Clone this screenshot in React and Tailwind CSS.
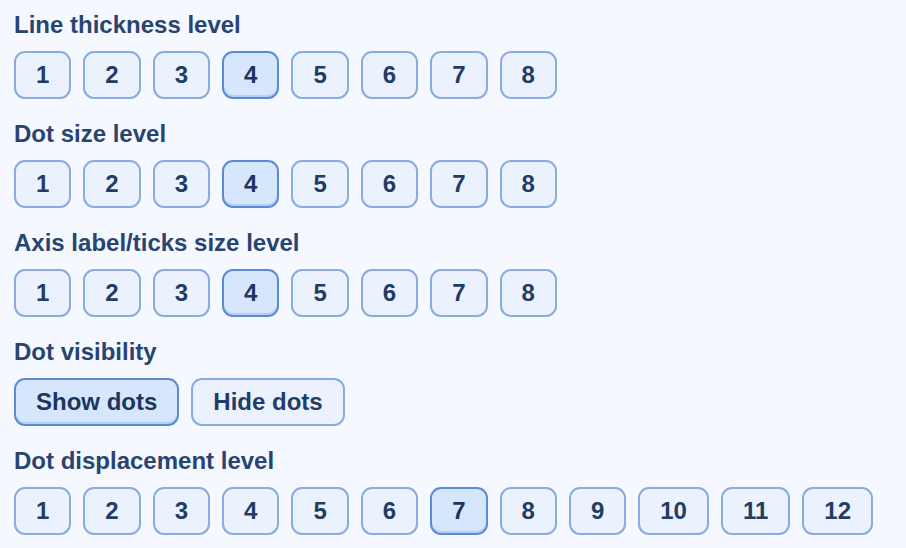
import React from "react";

function Btn({ label, selected }) {
  return (
    <button
      className={
        selected
          ? "rounded-[11px] border-2 border-[#5b8bd5] bg-[#d6e6fc] px-5 py-[8px] text-[24px] leading-[28px] font-bold text-[#1d365c] shadow-[inset_0_-2px_0_#b7cff2]"
          : "rounded-[11px] border-2 border-[#88ace0] bg-[#ebf2fe] px-5 py-[8px] text-[24px] leading-[28px] font-bold text-[#223d63]"
      }
    >
      {label}
    </button>
  );
}

function Section({ title, items, selected }) {
  return (
    <div className="flex flex-col gap-3">
      <div className="text-[24px] leading-[28px] font-bold text-[#27456f]">{title}</div>
      <div className="flex gap-3">
        {items.map((it) => (
          <Btn key={it} label={it} selected={it === selected} />
        ))}
      </div>
    </div>
  );
}

export default function App() {
  const eight = ["1", "2", "3", "4", "5", "6", "7", "8"];
  const twelve = ["1", "2", "3", "4", "5", "6", "7", "8", "9", "10", "11", "12"];
  return (
    <div
      className="w-[906px] h-[548px] overflow-hidden bg-[#f5f8ff] pl-[14px] pt-[11px] flex flex-col gap-[21px]"
      style={{ fontFamily: '"Liberation Sans", Arial, sans-serif' }}
    >
      <Section title="Line thickness level" items={eight} selected="4" />
      <Section title="Dot size level" items={eight} selected="4" />
      <Section title="Axis label/ticks size level" items={eight} selected="4" />
      <Section title="Dot visibility" items={["Show dots", "Hide dots"]} selected="Show dots" />
      <Section title="Dot displacement level" items={twelve} selected="7" />
    </div>
  );
}
